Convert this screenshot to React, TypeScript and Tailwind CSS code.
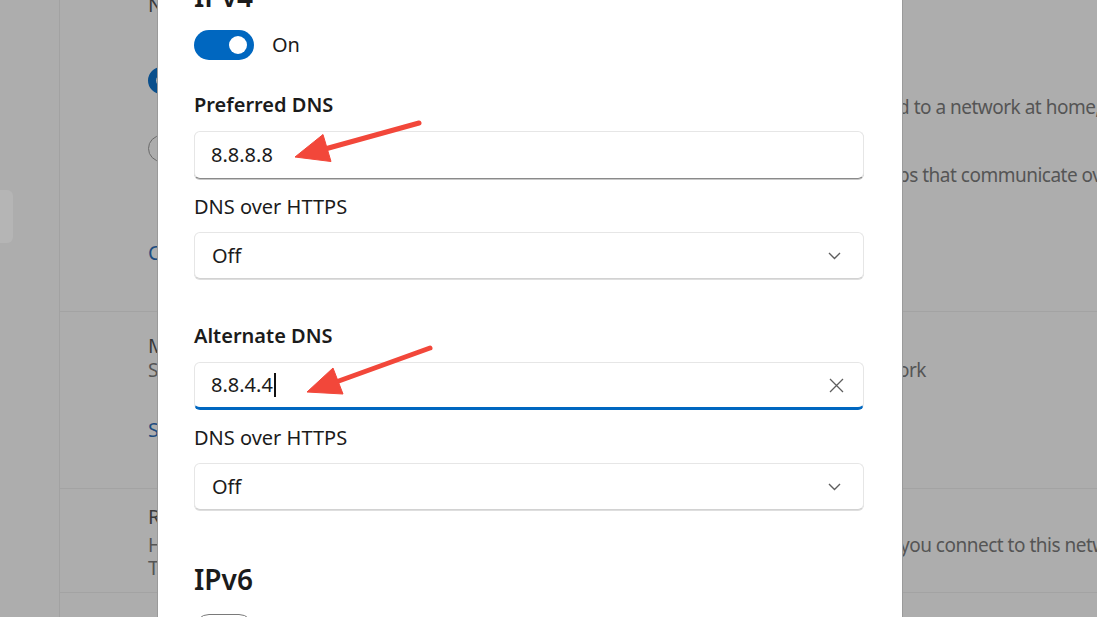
import React from "react";

const font = { fontFamily: '"Noto Sans", "Open Sans", sans-serif' };

// text that is hidden behind the dialog, then the part that shows on the right
function Cut({ hidden, shown, width }: { hidden: string; shown: string; width: string }) {
	return (
		<div className="whitespace-nowrap text-[19px] tracking-[-0.5px]">
			<span className={`inline-block overflow-hidden align-top ${width}`}>{hidden}</span>
			<span>{shown}</span>
		</div>
	);
}

function Background() {
	return (
		<div className="flex h-full w-full bg-[#adadad]">
			{/* Nav column */}
			<div className="w-[60px] shrink-0 border-r border-[#a2a2a2]">
				<div className="mt-[190px] h-[53px] w-[13px] rounded-r-[6px] bg-[#b5b5b5]" />
			</div>

			{/* Settings cards */}
			<div className="flex flex-1 flex-col overflow-hidden text-[20px] leading-[26px] text-[#3a3a3a]">
				<div className="flex h-[312px] shrink-0 flex-col border-b border-[#a3a3a3] pl-[88px]">
					<div className="-mt-[9px] leading-[28px]">Network profile type</div>
					<div className="mt-[48px] flex items-center gap-[14px]">
						<span className="h-[27px] w-[27px] rounded-full border-[8px] border-[#0a4f8c] bg-[#b5b5b5]" />
						<span>Public network (Recommended)</span>
					</div>
					<div className="pl-[42px] text-[#555]">
						<Cut
							width="w-[708px]"
							hidden="Your device is not discoverable on the network. Use this in most cases—when connecte"
							shown="d to a network at home, work, or in a public place."
						/>
					</div>
					<div className="mt-[15px] flex items-center gap-[14px]">
						<span className="h-[27px] w-[27px] rounded-full border-[1.5px] border-[#6a6a6a]" />
						<span>Private network</span>
					</div>
					<div className="pl-[42px] text-[#555]">
						<Cut
							width="w-[708px]"
							hidden="Your device is discoverable on the network. Select this if you need file sharing or use ap"
							shown="ps that communicate over this network."
						/>
					</div>
					<div className="mt-[52px] text-[#1d4c80]">Configure firewall and security settings</div>
				</div>

				<div className="flex h-[177px] shrink-0 flex-col border-b border-[#a3a3a3] pl-[88px] leading-[24px]">
					<div className="pt-[22px]">Metered connection</div>
					<div className="text-[#555]">
						<Cut
							width="w-[750px]"
							hidden="Some apps might work differently to reduce data usage when you're connected to this netw"
							shown="ork"
						/>
					</div>
					<div className="mt-[36px] text-[#1d4c80]">Set a data limit to help control data usage on this network</div>
				</div>

				<div className="flex h-[104px] shrink-0 flex-col border-b border-[#a3a3a3] pl-[88px] leading-[24px]">
					<div className="pt-[16px]">Random hardware addresses</div>
					<div className="mt-[4px] text-[#555]">
						<Cut
							width="w-[752px]"
							hidden="Help protect your privacy by making it harder for people to track your device location when "
							shown="you connect to this network."
						/>
					</div>
					<div className="-mt-[1px] text-[#555]">The setting takes effect the next time you connect to this network</div>
				</div>
			</div>
		</div>
	);
}

function TextBox({ value, focused }: { value: string; focused?: boolean }) {
	return (
		<div
			className={`flex h-[48px] w-[670px] items-center rounded-[6px] border border-[#e6e6e6] bg-white pl-[16px] pr-[19px] ${
				focused ? "border-b-[3px] border-b-[#0067c0]" : "border-b-[#8a8a8a] shadow-[0_1px_0_#c8c8c8]"
			}`}
		>
			<span className="text-[20px] text-[#1b1b1b]">{value}</span>
			{focused && <span className="ml-px h-[24px] w-[2px] bg-[#111]" />}
			{focused && (
				<svg className="ml-auto" width="15" height="15" viewBox="0 0 15 15">
					<path d="M1 1 L14 14 M14 1 L1 14" stroke="#5e5e5e" strokeWidth="1.3" fill="none" />
				</svg>
			)}
		</div>
	);
}

function Dropdown({ value }: { value: string }) {
	return (
		<div className="flex h-[47px] w-[670px] items-center rounded-[6px] border border-[#e6e6e6] border-b-[#d2d2d2] bg-white pl-[17px] pr-[22px] shadow-[0_1px_0_#dedede]">
			<span className="text-[20px] text-[#1b1b1b]">{value}</span>
			<svg className="ml-auto" width="13" height="8" viewBox="0 0 13 8">
				<path d="M1 1 L6.5 6.5 L12 1" stroke="#5e5e5e" strokeWidth="1.4" fill="none" />
			</svg>
		</div>
	);
}

function Dialog() {
	return (
		<div className="absolute left-[157px] top-0 flex h-full w-[746px] flex-col overflow-hidden border-x border-[#9a9a9a] bg-white pl-[36px] text-[#1b1b1b]">
			<div className="-mt-[24px] text-[28px] font-semibold leading-[40px]">IPv4</div>
			<div className="mt-[14px] flex h-[30px] items-center gap-[18px]">
				<div className="flex h-[30px] w-[60px] items-center justify-end rounded-full bg-[#0067c0] pr-[7px]">
					<span className="h-[18px] w-[18px] rounded-full bg-white" />
				</div>
				<span className="text-[20px] leading-[28px]">On</span>
			</div>

			<div className="mt-[31px] text-[20px] font-semibold leading-[28px]">Preferred DNS</div>
			<div className="mt-[12px]">
				<TextBox value="8.8.8.8" />
			</div>
			<div className="mt-[14px] text-[20px] leading-[28px]">DNS over HTTPS</div>
			<div className="mt-[11px]">
				<Dropdown value="Off" />
			</div>

			<div className="mt-[43px] text-[20px] font-semibold leading-[28px]">Alternate DNS</div>
			<div className="mt-[12px]">
				<TextBox value="8.8.4.4" focused />
			</div>
			<div className="mt-[14px] text-[20px] leading-[28px]">DNS over HTTPS</div>
			<div className="mt-[11px]">
				<Dropdown value="Off" />
			</div>

			<div className="mt-[49px] text-[28px] font-semibold leading-[40px]">IPv6</div>
			<div className="mt-[15px] h-[30px] w-[60px] shrink-0 rounded-full border-[1.5px] border-[#7a7a7a]" />
		</div>
	);
}

function Arrows() {
	return (
		<svg className="pointer-events-none absolute left-0 top-0" width="1097" height="617" viewBox="0 0 1097 617">
			<g fill="#f2473a" stroke="#f2473a">
				<line x1="419" y1="123" x2="325" y2="149" strokeWidth="5" strokeLinecap="round" />
				<polygon points="295,157 323,134.5 331,161.5" strokeWidth="1" strokeLinejoin="round" />
				<line x1="430" y1="348" x2="336" y2="382" strokeWidth="5" strokeLinecap="round" />
				<polygon points="307,392 333,368 343,394" strokeWidth="1" strokeLinejoin="round" />
			</g>
		</svg>
	);
}

export default function App() {
	return (
		<div className="relative h-[617px] w-[1097px] overflow-hidden" style={font}>
			<Background />
			<Dialog />
			<Arrows />
		</div>
	);
}
